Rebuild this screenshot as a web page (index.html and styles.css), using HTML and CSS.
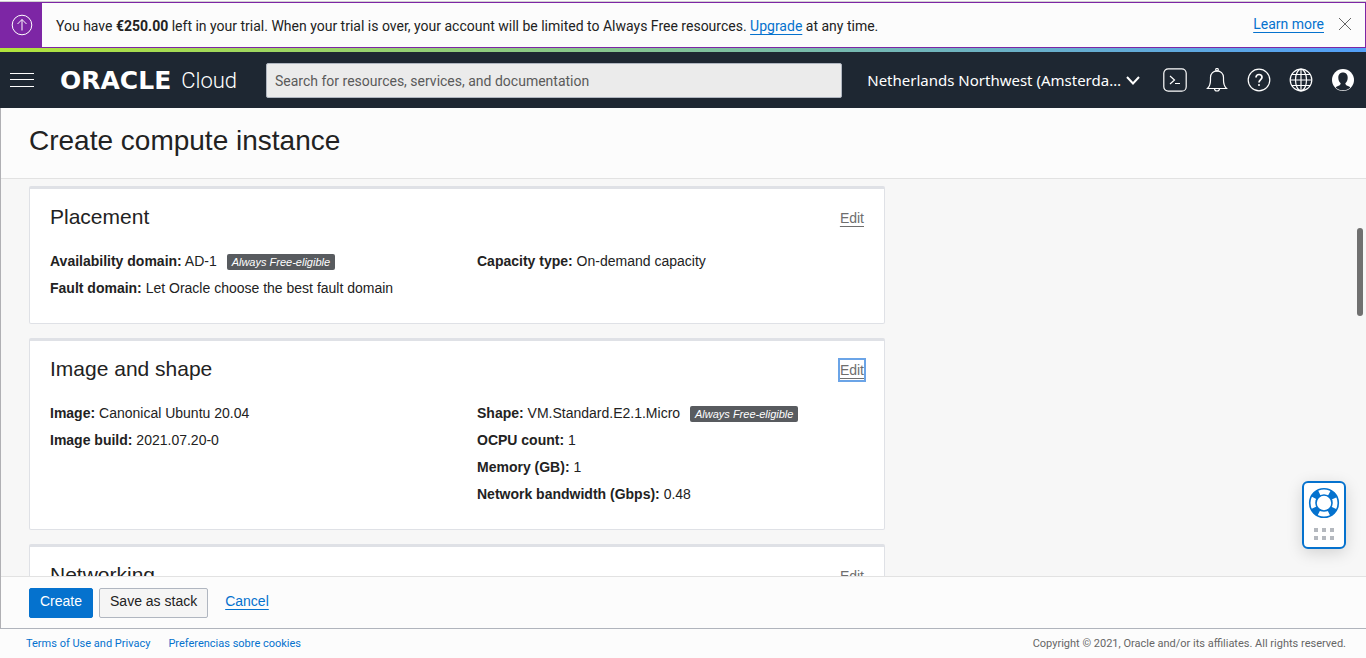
FILE: index.html
```html
<!DOCTYPE html>
<html lang="en">

<head>
  <meta charset="UTF-8">
  <meta name="viewport" content="width=device-width, initial-scale=1.0">
  <title>Create compute instance</title>
  <link rel="stylesheet" href="styles.css">
</head>

<body>
  <div class="trial-banner">
    <div class="trial-icon">
      <svg width="22" height="22" viewBox="0 0 22 22" fill="none" stroke="currentColor">
        <circle cx="11" cy="11" r="9.8"></circle>
        <path d="M11 16.5V5.5M6.5 10L11 5.5L15.5 10"></path>
      </svg>
    </div>
    <p>You have <strong>€250.00</strong> left in your trial. When your trial is over, your account will be limited to Always Free resources. <a href="#">Upgrade</a> at any time.</p>
    <div class="trial-actions">
      <a href="#">Learn more</a>
      <button type="button" class="icon-button" aria-label="Close">
        <svg width="14" height="14" viewBox="0 0 14 14" fill="none" stroke="currentColor">
          <path d="M1 1L13 13M13 1L1 13"></path>
        </svg>
      </button>
    </div>
  </div>

  <header class="topbar">
    <button type="button" class="icon-button" aria-label="Menu">
      <svg width="24" height="16" viewBox="0 0 24 16" stroke="currentColor">
        <path d="M0 1.5H24M0 7.5H24M0 14.5H24"></path>
      </svg>
    </button>
    <a href="#" class="logo"><span class="logo-oracle">ORACLE</span><span class="logo-cloud">Cloud</span></a>
    <input type="search" class="search" placeholder="Search for resources, services, and documentation" aria-label="Search">
    <div class="topbar-tools">
      <button type="button" class="icon-button region">
        Netherlands Northwest (Amsterda…
        <svg width="14" height="9" viewBox="0 0 14 9" fill="none" stroke="currentColor" stroke-width="2">
          <path d="M1 1L7 7.5L13 1"></path>
        </svg>
      </button>
      <button type="button" class="icon-button" aria-label="Cloud Shell">
        <svg width="24" height="24" viewBox="0 0 24 24" fill="none" stroke="currentColor" stroke-width="1.2">
          <rect x="0.8" y="0.8" width="22.4" height="22.4" rx="4.5"></rect>
          <path d="M7 8L11.5 12L7 16M12 15.5H17"></path>
        </svg>
      </button>
      <button type="button" class="icon-button" aria-label="Announcements">
        <svg width="24" height="24" viewBox="0 0 24 24" fill="none" stroke="currentColor" stroke-width="1.2">
          <path d="M2.5 20.5C4.5 18.5 5.5 16.5 5.5 12V9.5C5.5 5.5 8.5 2.8 12 2.8S18.5 5.5 18.5 9.5V12C18.5 16.5 19.5 18.5 21.5 20.5Z"></path>
          <circle cx="12" cy="1.8" r="1.3"></circle>
          <path d="M9.5 20.5A2.5 2.5 0 0 0 14.5 20.5"></path>
        </svg>
      </button>
      <button type="button" class="icon-button" aria-label="Help">
        <svg width="24" height="24" viewBox="0 0 24 24" fill="none" stroke="currentColor" stroke-width="1.2">
          <circle cx="12" cy="12" r="10.8"></circle>
          <path d="M9 9.5C9 7.5 10.2 6.5 12 6.5S15 7.7 15 9.3C15 11.5 12 11.7 12 14.5" stroke-width="1.7"></path>
          <circle cx="12" cy="17" r="1" fill="currentColor" stroke="none"></circle>
        </svg>
      </button>
      <button type="button" class="icon-button" aria-label="Language">
        <svg width="24" height="24" viewBox="0 0 24 24" fill="none" stroke="currentColor" stroke-width="1.2">
          <circle cx="12" cy="12" r="10.8"></circle>
          <ellipse cx="12" cy="12" rx="5.5" ry="10.8"></ellipse>
          <path d="M12 1.2V22.8M1.2 12H22.8M2.8 6.5H21.2M2.8 17.5H21.2"></path>
        </svg>
      </button>
      <button type="button" class="icon-button" aria-label="Profile">
        <svg width="24" height="24" viewBox="0 0 24 24">
          <circle cx="12" cy="12" r="11" fill="#fff"></circle>
          <path d="M12 4.5C8.9 4.5 7.3 6.7 7.3 9.7C7.3 12.2 8.3 14.2 9.7 15.2C9.7 17.2 7.5 17.7 5.5 18.7C4.8 19.1 4.7 19.5 5.2 19.9C7 21.6 9.3 22.3 12 22.3S17 21.6 18.8 19.9C19.3 19.5 19.2 19.1 18.5 18.7C16.5 17.7 14.3 17.2 14.3 15.2C15.7 14.2 16.7 12.2 16.7 9.7C16.7 6.7 15.1 4.5 12 4.5Z" fill="#1e2732"></path>
        </svg>
      </button>
    </div>
  </header>

  <div class="console">
    <h1>Create compute instance</h1>

    <main>
      <section class="card">
        <div class="card-head">
          <h2>Placement</h2>
          <a href="#">Edit</a>
        </div>
        <div class="card-body">
          <ul>
            <li><b>Availability domain:</b> AD-1 <span class="badge">Always Free-eligible</span></li>
            <li><b>Fault domain:</b> Let Oracle choose the best fault domain</li>
          </ul>
          <ul>
            <li><b>Capacity type:</b> On-demand capacity</li>
          </ul>
        </div>
      </section>

      <section class="card">
        <div class="card-head">
          <h2>Image and shape</h2>
          <a href="#" class="focused">Edit</a>
        </div>
        <div class="card-body">
          <ul>
            <li><b>Image:</b> Canonical Ubuntu 20.04</li>
            <li><b>Image build:</b> 2021.07.20-0</li>
          </ul>
          <ul>
            <li><b>Shape:</b> VM.Standard.E2.1.Micro <span class="badge">Always Free-eligible</span></li>
            <li><b>OCPU count:</b> 1</li>
            <li><b>Memory (GB):</b> 1</li>
            <li><b>Network bandwidth (Gbps):</b> 0.48</li>
          </ul>
        </div>
      </section>

      <section class="card">
        <div class="card-head">
          <h2>Networking</h2>
          <a href="#">Edit</a>
        </div>
      </section>
    </main>

    <div class="actions">
      <button type="submit" class="primary">Create</button>
      <button type="button" class="secondary">Save as stack</button>
      <a href="#">Cancel</a>
    </div>

    <div class="scroll-thumb"></div>
  </div>

  <footer>
    <a href="#">Terms of Use and Privacy</a>
    <a href="#">Preferencias sobre cookies</a>
    <small>Copyright © 2021, Oracle and/or its affiliates. All rights reserved.</small>
  </footer>

  <button type="button" class="support" aria-label="Support">
    <svg width="32" height="32" viewBox="0 0 32 32" fill="none" stroke="#0572ce">
      <circle cx="16" cy="16" r="11.2" stroke-width="7" stroke-dasharray="7.2 10.393" stroke-dashoffset="-5.2"></circle>
      <circle cx="16" cy="16" r="14.3" stroke-width="1.6"></circle>
      <circle cx="16" cy="16" r="8" stroke-width="1.6"></circle>
    </svg>
    <svg width="20" height="12" viewBox="0 0 20 12" fill="#b4b8be">
      <path d="M0 0h4v4H0zM8 0h4v4H8zM16 0h4v4h-4zM0 8h4v4H0zM8 8h4v4H8zM16 8h4v4h-4z"></path>
    </svg>
  </button>
</body>

</html>
```
FILE: styles.css
```css
:root {
  --ink: #222;
  --link: #0572ce;
  --purple: #7d26a5;
  --navy: #1e2732;
  --paper: #fcfcfc;
  --line: #dfe1e6;
  --ui: Roboto, sans-serif;
  --text: "Liberation Sans", Arial, sans-serif;
}

* {
  box-sizing: border-box;
}

body {
  margin: 0;
  height: 100vh;
  display: flex;
  flex-direction: column;
  overflow: hidden;
  color: var(--ink);
  background: var(--paper);
  font: 14px/20px var(--ui);
}

a {
  color: var(--link);
  text-underline-offset: 3px;
}

svg {
  display: block;
}

.icon-button {
  padding: 0;
  border: 0;
  background: none;
  color: inherit;
  font: inherit;
  cursor: pointer;
}

.trial-banner {
  flex: none;
  display: flex;
  min-height: 46px;
  margin-top: 2px;
  border: 1px solid var(--purple);
  box-shadow: 0 -1px #d0d0d0;
}

.trial-banner p {
  flex: 1;
  margin: 0;
  padding: 13px 14px 0;
}

.trial-icon {
  display: flex;
  align-items: center;
  justify-content: center;
  width: 41px;
  background: var(--purple);
  color: #fff;
}

.trial-actions {
  display: flex;
  gap: 14px;
  align-items: center;
  padding: 0 13px 2px 0;
}

.trial-actions button {
  color: #666;
}

.topbar {
  flex: none;
  display: flex;
  align-items: center;
  height: 60px;
  padding: 4px 11px 0 10px;
  background: linear-gradient(90deg, #b1e43c, #529ff8) top / 100% 4px no-repeat var(--navy);
  color: #fff;
}

.logo {
  display: flex;
  align-items: center;
  gap: 10px;
  width: 206px;
  margin-left: 26px;
  padding-top: 2px;
  color: #fff;
  text-decoration: none;
}

.logo-oracle {
  font: bold 25px/24px "DejaVu Sans", sans-serif;
}

.logo-cloud {
  font: 300 22px/24px Roboto, sans-serif;
}

.search {
  flex: 0 1 576px;
  min-width: 0;
  height: 35px;
  padding: 2px 8px 0;
  border: 1px solid #b0b6c0;
  border-radius: 2px;
  background: #ebebeb;
  font: 14px/20px var(--ui);
}

.search::placeholder {
  color: #5a5a5a;
}

.topbar-tools {
  display: flex;
  align-items: center;
  gap: 18px;
  margin-left: auto;
}

.region {
  display: flex;
  align-items: center;
  gap: 5px;
  margin-right: 5px;
  font: 15px/20px "Noto Sans", sans-serif;
  white-space: nowrap;
}

.console {
  position: relative;
  flex: 1;
  min-height: 0;
  display: flex;
  flex-direction: column;
  border-left: 1px solid #b0b0b4;
  border-bottom: 1px solid #b0b4bc;
  font: 14px/20px var(--text);
}

h1 {
  flex: none;
  margin: 0;
  padding: 17px 28px 21px;
  border-bottom: 1px solid #e2e2e2;
  font: 28px/32px var(--text);
}

h2 {
  margin: 0;
  font: 21px/28px var(--text);
}

main {
  flex: 1;
  min-height: 0;
  padding: 7px 28px 0;
  overflow: hidden;
  background: #f7f7f7;
}

.card {
  max-width: 856px;
  margin-bottom: 14px;
  padding: 14px 20px 21px;
  border: 1px solid var(--line);
  border-top-width: 3px;
  border-radius: 2px;
  background: #fff;
}

.card-head {
  display: flex;
  align-items: center;
  justify-content: space-between;
  margin-bottom: 17px;
}

.card-head a {
  margin-top: 2px;
  color: #6e6e6e;
}

.focused {
  outline: 2px solid #6ba4e7;
}

.card-body {
  display: grid;
  grid-template-columns: 1fr 1fr;
  gap: 40px;
}

ul {
  margin: 0;
  padding: 0;
  list-style: none;
}

li {
  height: 27px;
  line-height: 27px;
}

.badge {
  display: inline-block;
  margin-left: 6px;
  padding: 0 5px;
  border-radius: 2px;
  background: #585b5f;
  color: #fff;
  font: italic 11px/16px var(--text);
}

.actions {
  flex: none;
  display: flex;
  align-items: flex-start;
  padding: 11px 28px 10px;
  border-top: 1px solid #e2e2e2;
}

.actions button {
  height: 30px;
  margin-right: 6px;
  padding: 0 10px 4px;
  border: 1px solid #b0b6c0;
  border-radius: 2px;
  background: #f5f5f5;
  color: var(--ink);
  font: 14px/20px var(--text);
}

.actions .primary {
  border-color: var(--link);
  background: var(--link);
  color: #fff;
}

.actions a {
  margin: 3px 0 0 11px;
}

.scroll-thumb {
  position: absolute;
  top: 120px;
  right: 3px;
  width: 6px;
  height: 88px;
  border-radius: 3px;
  background: #707070;
}

footer {
  flex: none;
  display: flex;
  gap: 18px;
  padding: 5px 20px 4px 26px;
  font-size: 11px;
}

footer a {
  text-decoration: none;
}

footer small {
  margin-left: auto;
  color: #666;
  font-size: 11px;
}

.support {
  position: absolute;
  right: 20px;
  bottom: 109px;
  display: flex;
  flex-direction: column;
  align-items: center;
  gap: 9px;
  width: 44px;
  height: 68px;
  padding: 4px 0 0;
  border: 2px solid var(--link);
  border-radius: 6px;
  background: #fff;
  box-shadow: 0 4px 16px rgb(0 0 0 / 15%);
}
```
